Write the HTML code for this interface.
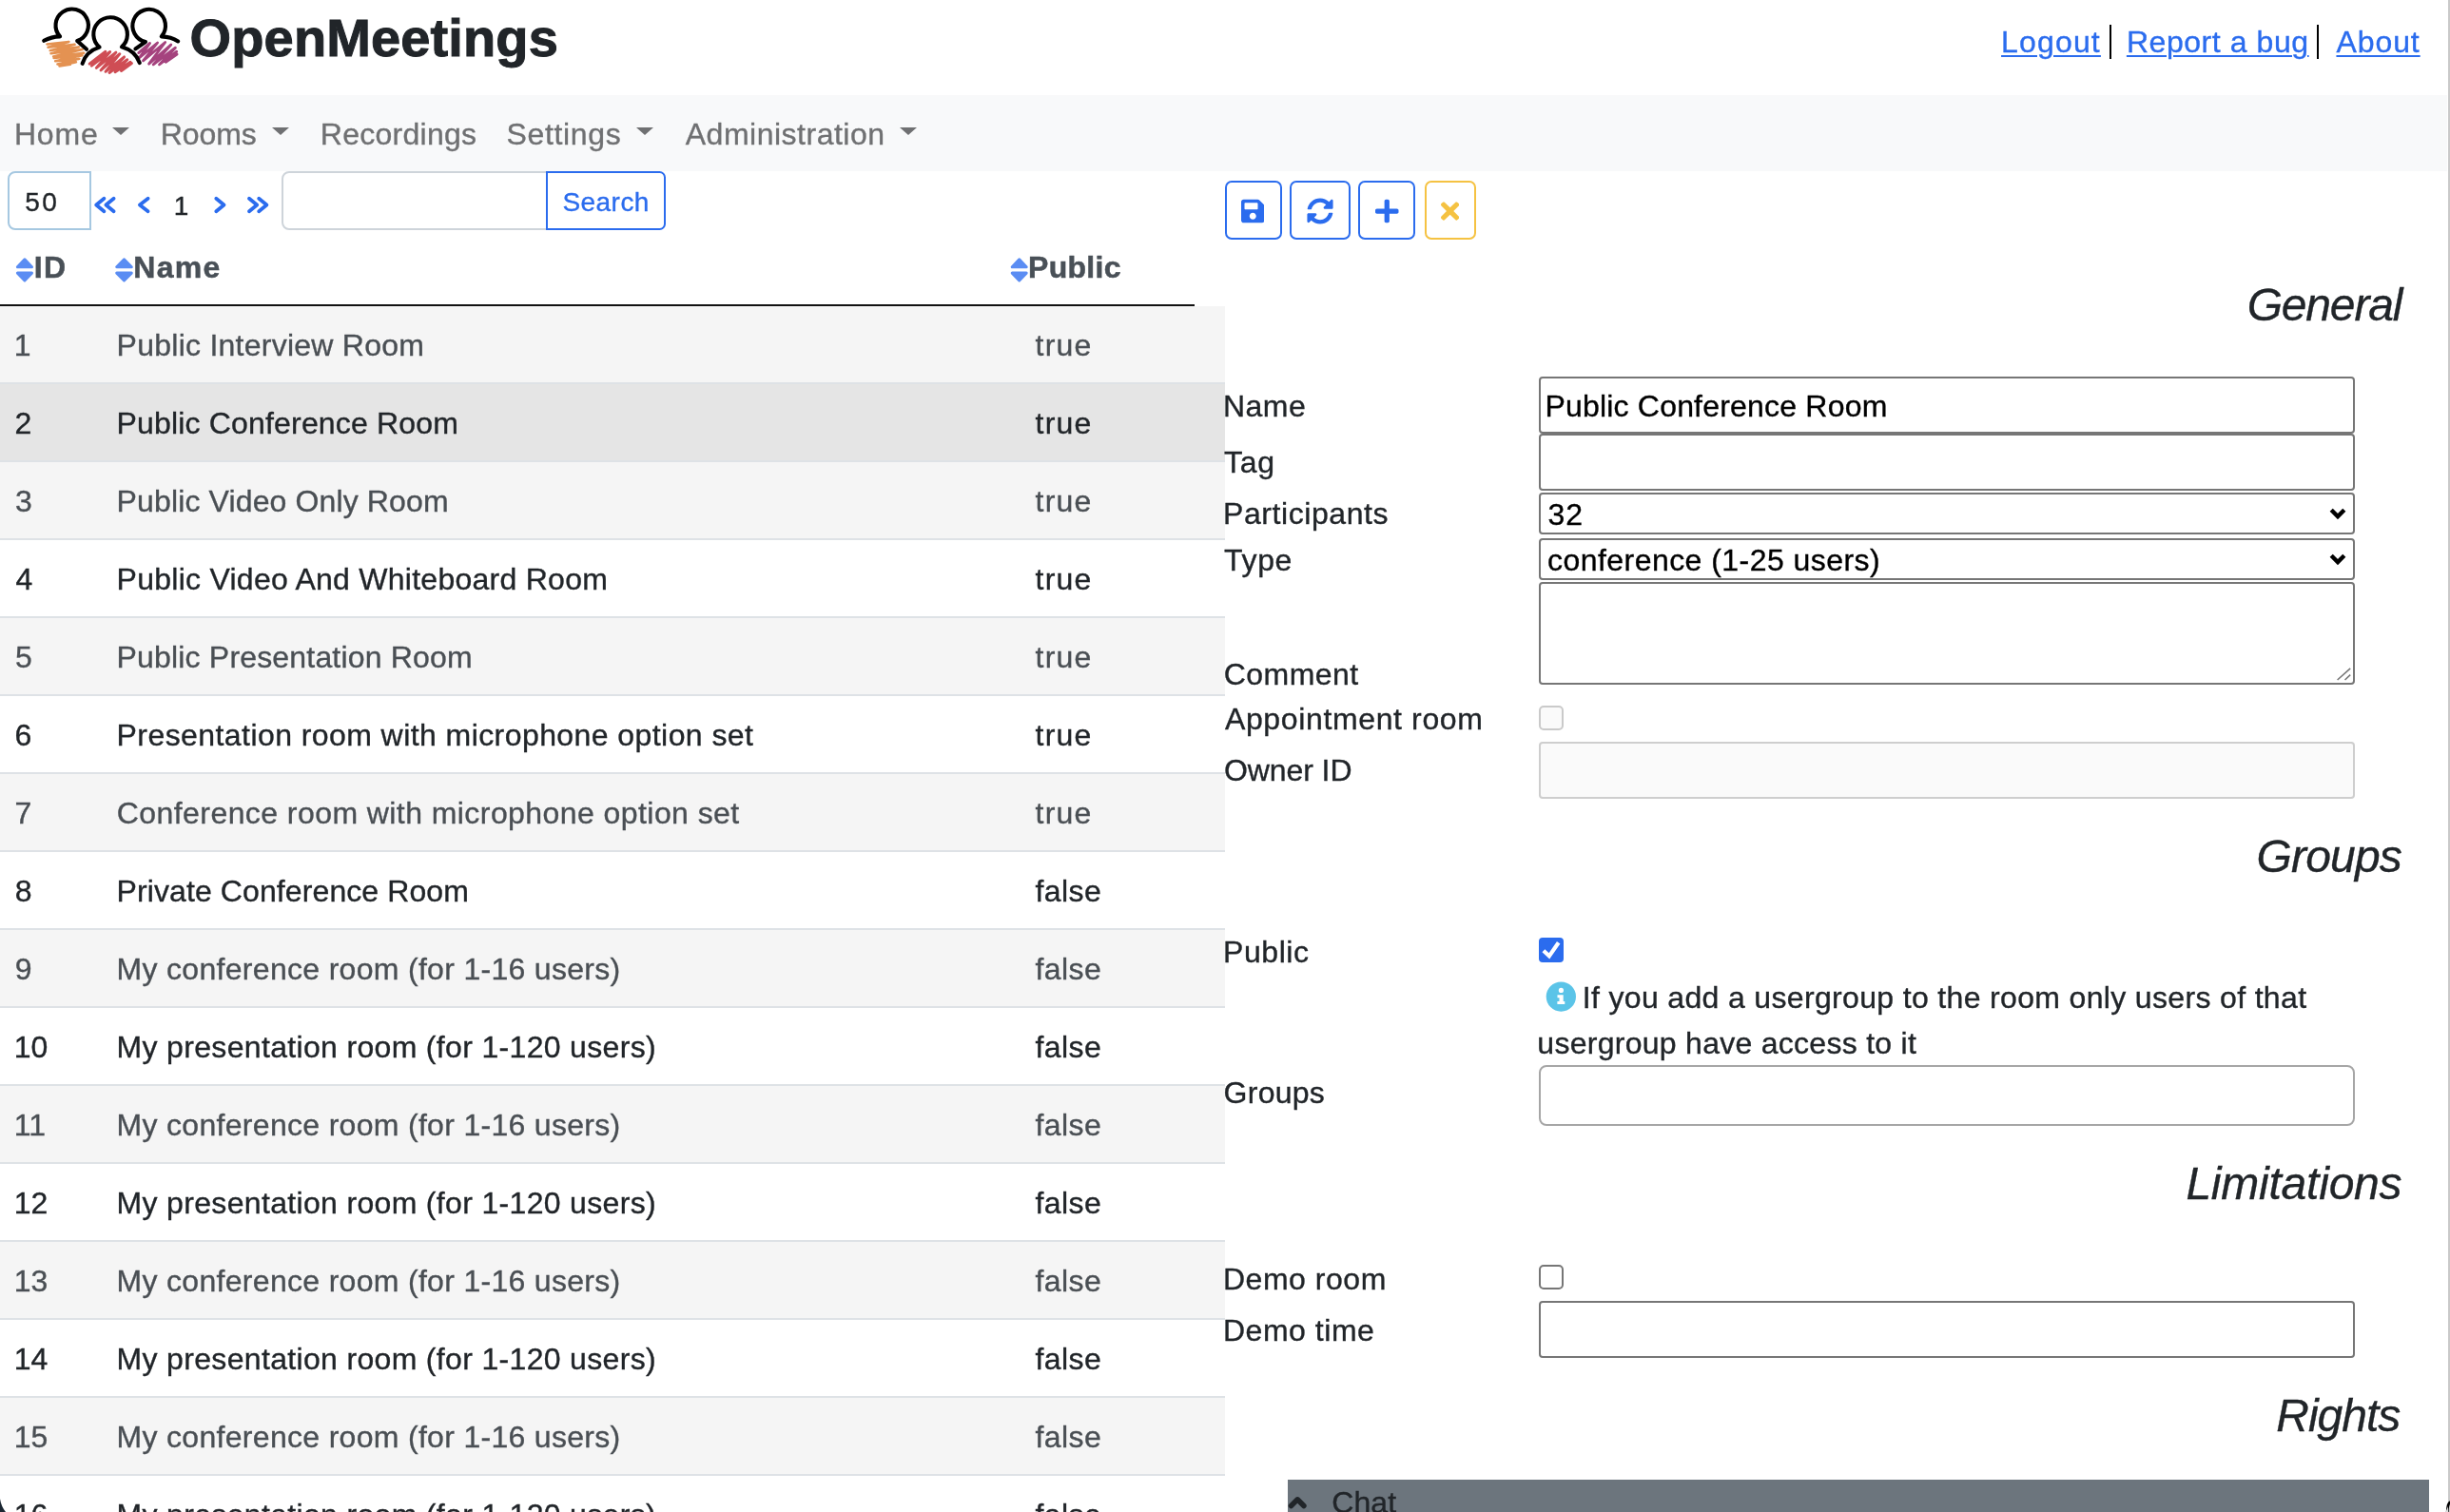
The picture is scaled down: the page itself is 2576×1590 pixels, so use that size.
<!DOCTYPE html>
<html lang="en"><head><meta charset="utf-8"><title>OpenMeetings</title>
<style>
html,body{margin:0;padding:0}
body{-webkit-font-smoothing:antialiased;will-change:transform;width:2576px;height:1590px;overflow:hidden;position:relative;background:#fff;font-family:"Liberation Sans",sans-serif;font-size:32px;color:#212529}
.t{-webkit-text-stroke:.35px currentColor;position:absolute;white-space:nowrap;margin:0;padding:0;display:block;font-weight:normal;text-decoration:none}
.abs{position:absolute}
a.lnk{text-decoration:underline;text-decoration-thickness:2px;text-underline-offset:3px}
.sep{position:absolute;top:26px;width:2px;height:36px;background:#000}
#menu{position:absolute;left:0;top:100px;width:2573px;height:80px;background:#f8f9fa}
.caret{position:absolute;top:134px;width:0;height:0;border-left:9.9px solid transparent;border-right:9.9px solid transparent;border-top:8.9px solid #6f7072}
.row{position:absolute;left:0;width:1288px;height:80px;border-bottom:2px solid #dee2e6}
.row.odd{background:#f5f5f5}
.row.sel{background:#e5e5e5}
.inp{position:absolute;box-sizing:border-box;background:#fff;border:2px solid #767676;border-radius:4px}
.btn{position:absolute;box-sizing:border-box;top:190px;height:62px;border:2px solid #2b6cee;border-radius:7px;background:#fff}
.btn svg{position:absolute}
</style></head><body>

<div id="header">
<svg id="logo" class="abs" style="left:40px;top:0" width="160" height="90" viewBox="40 0 160 90" fill="none" stroke-linecap="round" stroke-linejoin="round">
<g stroke="#e28a45" stroke-width="2.5" opacity=".93">
<polyline points="49.4,46.4 72.5,44.0 50.5,49.7 78.6,46.8 52.7,53.1 83.0,49.4 53.5,56.2 86.7,52.0 56.1,59.4 88.2,55.7 56.6,61.1 86.5,58.2 58.1,64.2 83.4,61.9 60.4,67.4 80.0,65.2 62.5,69.4 73.9,67.8"/>
</g>
<g stroke="#cb3f47" stroke-width="2.9" opacity=".93">
<polyline points="94.1,67.1 110.9,54.2 96.3,69.2 115.7,54.5 101.3,71.4 121.9,55.1 106.0,73.9 125.9,56.7 111.0,75.3 130.6,59.9 115.0,76.5 133.8,62.7 121.0,75.8 137.1,65.3 127.5,74.5 138.5,66.5"/>
</g>
<g stroke="#9e3574" stroke-width="2.8" opacity=".93">
<polyline points="145.7,55.6 157.6,45.4 146.6,60.6 165.6,45.0 150.5,63.9 173.7,44.5 156.6,67.2 179.8,47.0 161.2,67.9 184.4,50.2 167.5,67.9 185.7,54.2 174.3,65.3 186.1,57.0"/>
</g>
<g stroke="#000" stroke-width="4.1">
<path d="M46.2 42.8Q54 38.6 63.1 38.4A17.2 17.2 0 1 1 81.2 43L91 51.8"/>
<path d="M86.6 66.9Q90.5 54 104.6 49.6A17.8 17.8 0 1 1 128 49.3Q142.5 53.5 146.8 66.1"/>
<path d="M142.4 51.4L153 44A17.3 17.3 0 1 1 169.8 38.4Q180 38.8 187.2 43.4"/>
</g>
</svg>
<h1 class="t" style="left:199.6px;top:-1.9px;font-size:56px;line-height:84px;letter-spacing:0.125px;font-weight:bold;color:#212529;-webkit-text-stroke-width:1px;">OpenMeetings</h1>
<div id="toplinks">
<a class="t lnk" style="left:2104.07px;top:20.0px;font-size:32px;line-height:48px;letter-spacing:1.157px;color:#2b6cee;">Logout</a>
<a class="t lnk" style="left:2235.88px;top:20.0px;font-size:32px;line-height:48px;letter-spacing:0.561px;color:#2b6cee;">Report a bug</a>
<a class="t lnk" style="left:2456.44px;top:20.0px;font-size:32px;line-height:48px;letter-spacing:0.918px;color:#2b6cee;">About</a>
<i class="sep" style="left:2218px"></i><i class="sep" style="left:2436px"></i>
</div></div>
<nav id="menu"></nav>
<a class="t" style="left:14.88px;top:117.0px;font-size:32px;line-height:48px;letter-spacing:0.829px;color:#6f7072;">Home</a>
<a class="t" style="left:168.68px;top:117.0px;font-size:32px;line-height:48px;letter-spacing:-0.045px;color:#6f7072;">Rooms</a>
<a class="t" style="left:336.77px;top:117.0px;font-size:32px;line-height:48px;letter-spacing:0.269px;color:#6f7072;">Recordings</a>
<a class="t" style="left:532.55px;top:117.0px;font-size:32px;line-height:48px;letter-spacing:0.655px;color:#6f7072;">Settings</a>
<a class="t" style="left:720.74px;top:117.0px;font-size:32px;line-height:48px;letter-spacing:0.507px;color:#6f7072;">Administration</a>
<i class="caret" style="left:118.3px"></i>
<i class="caret" style="left:286.2px"></i>
<i class="caret" style="left:669px"></i>
<i class="caret" style="left:946.1px"></i>
<div id="paging">
<div class="abs" style="left:8px;top:180px;width:88px;height:62px;box-sizing:border-box;border:2px solid #a6c8e1;border-radius:8px 0 0 8px;background:#fff"></div>
<div class="abs" style="left:296px;top:180px;width:280px;height:62px;box-sizing:border-box;border:2px solid #ced4da;border-radius:8px 0 0 8px;background:#fff"></div>
<div class="abs" style="left:574px;top:180px;width:126px;height:62px;box-sizing:border-box;border:2px solid #2b6cee;border-radius:0 6.5px 6.5px 0;background:#fff"></div>
<span class="t" style="left:26.28px;top:191.5px;font-size:28px;line-height:42px;letter-spacing:2.47px;color:#212529;">50</span>
<span class="t" style="left:182.87px;top:195.5px;font-size:28px;line-height:42px;color:#212529;">1</span>
<span class="t" style="left:591.43px;top:191.8px;font-size:28px;line-height:42px;letter-spacing:0.455px;color:#2b6cee;">Search</span>
<svg id="pager" class="abs" style="left:90px;top:200px" width="200" height="32" viewBox="90 200 200 32" fill="none" stroke="#2b6cee" stroke-width="3.8" stroke-linecap="round" stroke-linejoin="round">
<path d="M109.400 208.700L101.200 215.450L109.400 222.200M119.600 208.700L111.400 215.450L119.600 222.200"/>
<path d="M155.600 208.700L146.900 215.450L155.600 222.200"/>
<path d="M227.300 208.700L235.500 215.450L227.300 222.200"/>
<path d="M262 208.700L270.200 215.450L262 222.200M272.200 208.700L280.400 215.450L272.200 222.200"/>
</svg>

</div>
<div id="thead">
<span class="t" style="left:35.76px;top:256.5px;font-size:32px;line-height:48px;letter-spacing:1.384px;font-weight:bold;color:#495057;-webkit-text-stroke-width:.5px;">ID</span>
<span class="t" style="left:140.36px;top:256.5px;font-size:32px;line-height:48px;letter-spacing:1.259px;font-weight:bold;color:#495057;-webkit-text-stroke-width:.5px;">Name</span>
<span class="t" style="left:1081.06px;top:256.5px;font-size:32px;line-height:48px;letter-spacing:0.272px;font-weight:bold;color:#495057;-webkit-text-stroke-width:.5px;">Public</span>
<svg id="sorticons" class="abs" style="left:0;top:262px" width="1288" height="44" viewBox="0 262 1288 44" fill="#5b8df3" stroke="#5b8df3" stroke-width="3" stroke-linejoin="round">
<path d="M18.4 280.8H33.5L25.95 272.9ZM18.4 287.1H33.5L25.95 295Z"/>
<path d="M122.7 280.8H138.3L130.5 272.9ZM122.7 287.1H138.3L130.5 295Z"/>
<path d="M1064.2 280.8H1079.2L1071.7 272.9ZM1064.2 287.1H1079.2L1071.7 295Z"/>
</svg>

<div class="abs" style="left:0;top:320px;width:1256px;height:2px;background:#111"></div>
</div>
<div id="tbody">
<div class="row odd" style="top:322px"><span class="t" style="left:14.76px;top:16.6px;font-size:32px;line-height:48px;color:#4a4f54;">1</span><span class="t" style="left:122.58px;top:16.6px;font-size:32px;line-height:48px;letter-spacing:0.25px;color:#4a4f54;">Public Interview Room</span><span class="t" style="left:1088.52px;top:16.6px;font-size:32px;line-height:48px;letter-spacing:1.255px;color:#4a4f54;">true</span></div>
<div class="row sel" style="top:404px"><span class="t" style="left:15.59px;top:16.6px;font-size:32px;line-height:48px;color:#212529;">2</span><span class="t" style="left:122.58px;top:16.6px;font-size:32px;line-height:48px;letter-spacing:0.171px;color:#212529;">Public Conference Room</span><span class="t" style="left:1088.52px;top:16.6px;font-size:32px;line-height:48px;letter-spacing:1.255px;color:#212529;">true</span></div>
<div class="row odd" style="top:486px"><span class="t" style="left:15.98px;top:16.6px;font-size:32px;line-height:48px;color:#4a4f54;">3</span><span class="t" style="left:122.58px;top:16.6px;font-size:32px;line-height:48px;letter-spacing:0.133px;color:#4a4f54;">Public Video Only Room</span><span class="t" style="left:1088.52px;top:16.6px;font-size:32px;line-height:48px;letter-spacing:1.255px;color:#4a4f54;">true</span></div>
<div class="row" style="top:568px"><span class="t" style="left:16.47px;top:16.6px;font-size:32px;line-height:48px;color:#212529;">4</span><span class="t" style="left:122.58px;top:16.6px;font-size:32px;line-height:48px;letter-spacing:0.262px;color:#212529;">Public Video And Whiteboard Room</span><span class="t" style="left:1088.52px;top:16.6px;font-size:32px;line-height:48px;letter-spacing:1.255px;color:#212529;">true</span></div>
<div class="row odd" style="top:650px"><span class="t" style="left:15.92px;top:16.6px;font-size:32px;line-height:48px;color:#4a4f54;">5</span><span class="t" style="left:122.58px;top:16.6px;font-size:32px;line-height:48px;letter-spacing:0.177px;color:#4a4f54;">Public Presentation Room</span><span class="t" style="left:1088.52px;top:16.6px;font-size:32px;line-height:48px;letter-spacing:1.255px;color:#4a4f54;">true</span></div>
<div class="row" style="top:732px"><span class="t" style="left:15.57px;top:16.6px;font-size:32px;line-height:48px;color:#212529;">6</span><span class="t" style="left:122.58px;top:16.6px;font-size:32px;line-height:48px;letter-spacing:0.427px;color:#212529;">Presentation room with microphone option set</span><span class="t" style="left:1088.52px;top:16.6px;font-size:32px;line-height:48px;letter-spacing:1.255px;color:#212529;">true</span></div>
<div class="row odd" style="top:814px"><span class="t" style="left:15.56px;top:16.6px;font-size:32px;line-height:48px;color:#4a4f54;">7</span><span class="t" style="left:122.78px;top:16.6px;font-size:32px;line-height:48px;letter-spacing:0.431px;color:#4a4f54;">Conference room with microphone option set</span><span class="t" style="left:1088.52px;top:16.6px;font-size:32px;line-height:48px;letter-spacing:1.255px;color:#4a4f54;">true</span></div>
<div class="row" style="top:896px"><span class="t" style="left:15.81px;top:16.6px;font-size:32px;line-height:48px;color:#212529;">8</span><span class="t" style="left:122.58px;top:16.6px;font-size:32px;line-height:48px;letter-spacing:0.098px;color:#212529;">Private Conference Room</span><span class="t" style="left:1088.55px;top:16.6px;font-size:32px;line-height:48px;letter-spacing:0.42px;color:#212529;">false</span></div>
<div class="row odd" style="top:978px"><span class="t" style="left:15.7px;top:16.6px;font-size:32px;line-height:48px;color:#4a4f54;">9</span><span class="t" style="left:122.58px;top:16.6px;font-size:32px;line-height:48px;letter-spacing:0.306px;color:#4a4f54;">My conference room (for 1-16 users)</span><span class="t" style="left:1088.55px;top:16.6px;font-size:32px;line-height:48px;letter-spacing:0.42px;color:#4a4f54;">false</span></div>
<div class="row" style="top:1060px"><span class="t" style="left:14.76px;top:16.6px;font-size:32px;line-height:48px;color:#212529;">10</span><span class="t" style="left:122.58px;top:16.6px;font-size:32px;line-height:48px;letter-spacing:0.33px;color:#212529;">My presentation room (for 1-120 users)</span><span class="t" style="left:1088.55px;top:16.6px;font-size:32px;line-height:48px;letter-spacing:0.42px;color:#212529;">false</span></div>
<div class="row odd" style="top:1142px"><span class="t" style="left:14.76px;top:16.6px;font-size:32px;line-height:48px;color:#4a4f54;">11</span><span class="t" style="left:122.58px;top:16.6px;font-size:32px;line-height:48px;letter-spacing:0.306px;color:#4a4f54;">My conference room (for 1-16 users)</span><span class="t" style="left:1088.55px;top:16.6px;font-size:32px;line-height:48px;letter-spacing:0.42px;color:#4a4f54;">false</span></div>
<div class="row" style="top:1224px"><span class="t" style="left:14.76px;top:16.6px;font-size:32px;line-height:48px;color:#212529;">12</span><span class="t" style="left:122.58px;top:16.6px;font-size:32px;line-height:48px;letter-spacing:0.33px;color:#212529;">My presentation room (for 1-120 users)</span><span class="t" style="left:1088.55px;top:16.6px;font-size:32px;line-height:48px;letter-spacing:0.42px;color:#212529;">false</span></div>
<div class="row odd" style="top:1306px"><span class="t" style="left:14.76px;top:16.6px;font-size:32px;line-height:48px;color:#4a4f54;">13</span><span class="t" style="left:122.58px;top:16.6px;font-size:32px;line-height:48px;letter-spacing:0.306px;color:#4a4f54;">My conference room (for 1-16 users)</span><span class="t" style="left:1088.55px;top:16.6px;font-size:32px;line-height:48px;letter-spacing:0.42px;color:#4a4f54;">false</span></div>
<div class="row" style="top:1388px"><span class="t" style="left:14.76px;top:16.6px;font-size:32px;line-height:48px;color:#212529;">14</span><span class="t" style="left:122.58px;top:16.6px;font-size:32px;line-height:48px;letter-spacing:0.33px;color:#212529;">My presentation room (for 1-120 users)</span><span class="t" style="left:1088.55px;top:16.6px;font-size:32px;line-height:48px;letter-spacing:0.42px;color:#212529;">false</span></div>
<div class="row odd" style="top:1470px"><span class="t" style="left:14.76px;top:16.6px;font-size:32px;line-height:48px;color:#4a4f54;">15</span><span class="t" style="left:122.58px;top:16.6px;font-size:32px;line-height:48px;letter-spacing:0.306px;color:#4a4f54;">My conference room (for 1-16 users)</span><span class="t" style="left:1088.55px;top:16.6px;font-size:32px;line-height:48px;letter-spacing:0.42px;color:#4a4f54;">false</span></div>
<div class="row" style="top:1552px"><span class="t" style="left:14.76px;top:16.6px;font-size:32px;line-height:48px;color:#212529;">16</span><span class="t" style="left:122.58px;top:16.6px;font-size:32px;line-height:48px;letter-spacing:0.33px;color:#212529;">My presentation room (for 1-120 users)</span><span class="t" style="left:1088.55px;top:16.6px;font-size:32px;line-height:48px;letter-spacing:0.42px;color:#212529;">false</span></div>
</div>
<div id="form">
<div id="toolbar">
<div class="btn" style="left:1288px;width:60px"><svg style="left:14.8px;top:15.8px" width="24.5" height="28" viewBox="0 0 448 512"><path fill="#2b6cee" d="M433.941 129.941l-83.882-83.882A48 48 0 0 0 316.118 32H48C21.490 32 0 53.490 0 80v352c0 26.510 21.490 48 48 48h352c26.510 0 48-21.490 48-48V163.882a48 48 0 0 0-14.059-33.941zM224 416c-35.346 0-64-28.654-64-64 0-35.346 28.654-64 64-64s64 28.654 64 64c0 35.346-28.654 64-64 64zm96-304.520V212c0 6.627-5.373 12-12 12H76c-6.627 0-12-5.373-12-12V108c0-6.627 5.373-12 12-12h228.520c3.183 0 6.235 1.264 8.485 3.515l3.480 3.480A11.996 11.996 0 0 1 320 111.480z"/></svg></div>
<div class="btn" style="left:1356px;width:64px"><svg style="left:16.200px;top:15.800px" width="28" height="28" viewBox="0 0 512 512"><path fill="#2b6cee" d="M370.720 133.280C339.458 104.008 298.888 87.962 255.848 88c-77.458.068-144.328 53.178-162.791 126.850-1.344 5.363-6.122 9.150-11.651 9.150H24.103c-7.498 0-13.194-6.807-11.807-14.176C33.933 94.924 134.813 8 256 8c66.448 0 126.791 26.136 171.315 68.685L463.030 40.970C478.149 25.851 504 36.559 504 57.941V192c0 13.255-10.745 24-24 24H345.941c-21.382 0-32.090-25.851-16.971-40.971l41.750-41.749zM32 296h134.059c21.382 0 32.090 25.851 16.971 40.971l-41.750 41.750c31.262 29.273 71.835 45.319 114.876 45.280 77.418-.070 144.315-53.144 162.787-126.849 1.344-5.363 6.122-9.150 11.651-9.150h57.304c7.498 0 13.194 6.807 11.807 14.176C478.067 417.076 377.187 504 256 504c-66.448 0-126.791-26.136-171.315-68.685L48.970 471.030C33.851 486.149 8 475.441 8 454.059V320c0-13.255 10.745-24 24-24z"/></svg></div>
<div class="btn" style="left:1428px;width:60px"><svg style="left:16.200px;top:15.800px" width="24.500" height="28" viewBox="0 0 448 512"><path fill="#2b6cee" d="M416 208H272V64c0-17.670-14.330-32-32-32h-32c-17.670 0-32 14.330-32 32v144H32c-17.670 0-32 14.330-32 32v32c0 17.670 14.330 32 32 32h144v144c0 17.670 14.330 32 32 32h32c17.670 0 32-14.330 32-32V304h144c17.670 0 32-14.330 32-32v-32c0-17.670-14.330-32-32-32z"/></svg></div>
<div class="btn" style="left:1498px;width:54px;border-color:#f5c242"><svg style="left:15.200px;top:15.800px" width="19.250" height="28" viewBox="0 0 352 512"><path fill="#f5c242" d="M242.720 256l100.070-100.070c12.280-12.280 12.280-32.190 0-44.480l-22.240-22.240c-12.280-12.280-32.190-12.280-44.480 0L176 189.280 75.930 89.210c-12.280-12.280-32.190-12.280-44.480 0L9.210 111.450c-12.280 12.280-12.280 32.190 0 44.480L109.280 256 9.210 356.070c-12.280 12.280-12.280 32.190 0 44.480l22.240 22.240c12.280 12.280 32.200 12.280 44.480 0L176 322.720l100.070 100.070c12.280 12.280 32.200 12.280 44.480 0l22.240-22.240c12.280-12.280 12.280-32.190 0-44.480L242.720 256z"/></svg></div>
</div>

<legend class="t" style="left:2362.63px;top:285.3px;font-size:48px;line-height:72px;letter-spacing:-1.163px;font-style:italic;color:#212529;">General</legend>
<legend class="t" style="left:2372.53px;top:865.3px;font-size:48px;line-height:72px;letter-spacing:-0.831px;font-style:italic;color:#212529;">Groups</legend>
<legend class="t" style="left:2298.42px;top:1209.3px;font-size:48px;line-height:72px;letter-spacing:-0.227px;font-style:italic;color:#212529;">Limitations</legend>
<legend class="t" style="left:2393.22px;top:1453.0px;font-size:48px;line-height:72px;letter-spacing:-0.999px;font-style:italic;color:#212529;">Rights</legend>
<label class="t" style="left:1285.97px;top:403.1px;font-size:32px;line-height:48px;letter-spacing:0.496px;color:#212529;">Name</label>
<label class="t" style="left:1287.08px;top:461.8px;font-size:32px;line-height:48px;letter-spacing:0.694px;color:#212529;">Tag</label>
<label class="t" style="left:1285.97px;top:516.4px;font-size:32px;line-height:48px;letter-spacing:0.581px;color:#212529;">Participants</label>
<label class="t" style="left:1287.08px;top:564.7px;font-size:32px;line-height:48px;letter-spacing:0.655px;color:#212529;">Type</label>
<label class="t" style="left:1286.78px;top:684.7px;font-size:32px;line-height:48px;letter-spacing:0.459px;color:#212529;">Comment</label>
<label class="t" style="left:1287.94px;top:732.3px;font-size:32px;line-height:48px;letter-spacing:0.634px;color:#212529;">Appointment room</label>
<label class="t" style="left:1286.88px;top:786.3px;font-size:32px;line-height:48px;letter-spacing:-0.071px;color:#212529;">Owner ID</label>
<label class="t" style="left:1285.97px;top:976.7px;font-size:32px;line-height:48px;letter-spacing:0.583px;color:#212529;">Public</label>
<label class="t" style="left:1286.59px;top:1125.0px;font-size:32px;line-height:48px;letter-spacing:0.266px;color:#212529;">Groups</label>
<label class="t" style="left:1285.97px;top:1320.9px;font-size:32px;line-height:48px;letter-spacing:0.522px;color:#212529;">Demo room</label>
<label class="t" style="left:1285.97px;top:1374.8px;font-size:32px;line-height:48px;letter-spacing:0.53px;color:#212529;">Demo time</label>
<div class="inp" style="left:1618px;top:396px;width:858px;height:60px"></div>
<div class="inp" style="left:1618px;top:456px;width:858px;height:60px"></div>
<div class="inp" style="left:1618px;top:518px;width:858px;height:44px"></div>
<div class="inp" style="left:1618px;top:566px;width:858px;height:44px"></div>
<div class="inp" style="left:1618px;top:612px;width:858px;height:108px"></div>
<div class="inp" style="left:1618px;top:742px;width:26px;height:26px;border-color:#cacaca;background:#fafafa;border-radius:5px"></div>
<div class="inp" style="left:1618px;top:780px;width:858px;height:60px;border-color:#cecece;background:#fafafa"></div>
<div class="inp" style="left:1618px;top:986px;width:26px;height:26px;border:none;background:#2b6cee;border-radius:4px"></div>
<div class="inp" style="left:1618px;top:1120px;width:858px;height:64px;border-color:#a6a6a6;border-radius:8px"></div>
<div class="inp" style="left:1618px;top:1330px;width:26px;height:26px;border-color:#767676;border-radius:5px"></div>
<div class="inp" style="left:1618px;top:1368px;width:858px;height:60px"></div>
<svg id="formicons" class="abs" style="left:1600px;top:520px" width="900" height="560" viewBox="1600 520 900 560" fill="none">
<path d="M2451.200 536.300L2458 543.100L2464.800 536.300M2451.200 584.300L2458 591.100L2464.800 584.300" stroke="#000" stroke-width="4.400" stroke-linecap="butt" stroke-linejoin="miter"/>
<path d="M2457.600 715L2471.200 702.900M2465.500 715L2471.200 709.700" stroke="#777" stroke-width="1.600"/>
<path d="M1622.900 999.800L1628.900 1005.400L1638.700 991.300" stroke="#fff" stroke-width="4.200"/>
<circle cx="1641.350" cy="1048.050" r="15.650" fill="#5bc4e8"/>
<circle cx="1641.400" cy="1041.400" r="2.600" fill="#fff"/>
<path d="M1637.500 1046.300H1643.700V1052.900H1645.300V1056H1637.400V1052.900H1639.500V1049.300H1637.500Z" fill="#fff"/>
</svg>

<span class="t" style="left:1624.38px;top:403.1px;font-size:32px;line-height:48px;letter-spacing:0.2px;color:#000;">Public Conference Room</span>
<span class="t" style="left:1627.58px;top:517.0px;font-size:32px;line-height:48px;letter-spacing:0.8px;color:#000;">32</span>
<span class="t" style="left:1627.04px;top:564.7px;font-size:32px;line-height:48px;letter-spacing:0.451px;color:#000;">conference (1-25 users)</span>
<span class="t" style="left:1663.75px;top:1025.2px;font-size:32px;line-height:48px;letter-spacing:0.341px;color:#212529;">If you add a usergroup to the room only users of that</span>
<span class="t" style="left:1616.32px;top:1073.0px;font-size:32px;line-height:48px;letter-spacing:0.276px;color:#212529;">usergroup have access to it</span>
</div>
<div id="chat" class="abs" style="left:1354px;top:1556px;width:1200px;height:34px;background:#6c757d"></div>
<svg class="abs" style="left:1350px;top:1566px" width="30" height="24" viewBox="0 0 30 24"><path d="M7.5 17.5 L14.2 10.8 L20.9 17.5" fill="none" stroke="#212529" stroke-width="5.5" stroke-linecap="round" stroke-linejoin="round"/></svg>
<span class="t" style="left:1400.17px;top:1556.2px;font-size:32px;line-height:48px;letter-spacing:0.155px;color:#212529;">Chat</span>
<div class="abs" style="left:2574px;top:0;width:2px;height:1590px;background:#c9c9c9"></div>
<svg class="abs" style="left:0;top:1570px" width="2576" height="20" viewBox="0 1570 2576 20"><path d="M0 1576Q1.2 1584 6 1590H0Z" fill="#1b2732"/><path d="M2576.5 1579.6Q2573.4 1580.6 2573.2 1590.5" fill="none" stroke="#000" stroke-width="2.8"/><path d="M2571.5 1590L2574 1584V1590Z" fill="#ddd"/></svg>
</body></html>
